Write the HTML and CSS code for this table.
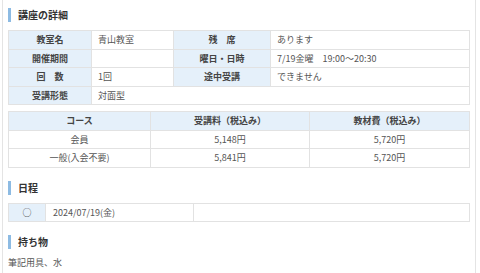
FILE: index.html
```html
<!DOCTYPE html>
<html lang="ja">
<head>
<meta charset="utf-8">
<link rel="stylesheet" href="styles.css">
</head>
<body>
<div class="panel">
  <h2 class="heading">講座の詳細</h2>
  <table class="tbl detail">
    <colgroup><col class="c1"><col class="c2"><col class="c3"><col></colgroup>
    <tr><th>教室名</th><td>青山教室</td><th>残　席</th><td>あります</td></tr>
    <tr><th>開催期間</th><td></td><th>曜日・日時</th><td>7/19金曜　19:00～20:30</td></tr>
    <tr><th>回　数</th><td>1回</td><th>途中受講</th><td>できません</td></tr>
    <tr><th>受講形態</th><td colspan="3">対面型</td></tr>
  </table>
  <table class="tbl price">
    <colgroup><col class="p1"><col class="p2"><col></colgroup>
    <tr><th>コース</th><th>受講料（税込み）</th><th>教材費（税込み）</th></tr>
    <tr><td>会員</td><td>5,148円</td><td>5,720円</td></tr>
    <tr><td>一般(入会不要)</td><td>5,841円</td><td>5,720円</td></tr>
  </table>
  <h2 class="heading">日程</h2>
  <table class="tbl sched">
    <colgroup><col class="s1"><col class="s2"><col></colgroup>
    <tr><th>○</th><td>2024/07/19(金)</td><td></td></tr>
  </table>
  <h2 class="heading">持ち物</h2>
  <p class="note">筆記用具、水</p>
</div>
</body>
</html>
```

FILE: styles.css
```css
html, body {
  margin: 0;
  padding: 0;
  background: #fff;
}
body {
  font-family: "Noto Sans CJK JP", "Noto Sans", sans-serif;
  color: #555;
  font-size: 9px;
}
.panel {
  margin-left: 2px;
  width: 462px;
  min-height: 273px;
  border-left: 1px solid #e4e4e4;
  border-right: 1px solid #e4e4e4;
  padding: 8px 5px 0 5px;
  display: flex;
  flex-direction: column;
  box-sizing: content-box;
}
.heading {
  margin: 0;
  font-size: 10px;
  font-weight: bold;
  color: #333;
  border-left: 3px solid #8dbbe3;
  padding-left: 7px;
  line-height: 14px;
  height: 14px;
}
.tbl {
  width: 100%;
  border-collapse: collapse;
  table-layout: fixed;
  margin-top: 8px;
}
.tbl th, .tbl td {
  border: 1px solid #e2e2e2;
  height: 17.5px;
  padding: 0 6px;
  line-height: 17.5px;
  font-weight: normal;
  white-space: nowrap;
}
.tbl th {
  background: #e5f0fa;
  text-align: center;
  color: #444;
}
.detail th { font-weight: bold; }
.c1 { width: 83px; }
.c2 { width: 82px; }
.c3 { width: 97px; }
.price { margin-top: 6px; margin-bottom: 13px; }
.price th { font-weight: bold; }
.price td { text-align: center; }
.p1 { width: 142px; }
.p2 { width: 159px; }
.sched { margin-bottom: 13px; }
.sched td { padding-left: 7px; }
.s1 { width: 37px; }
.s2 { width: 148px; }
.note {
  margin: 7px 0 0 0;
  font-size: 9px;
  line-height: 14px;
}
```
